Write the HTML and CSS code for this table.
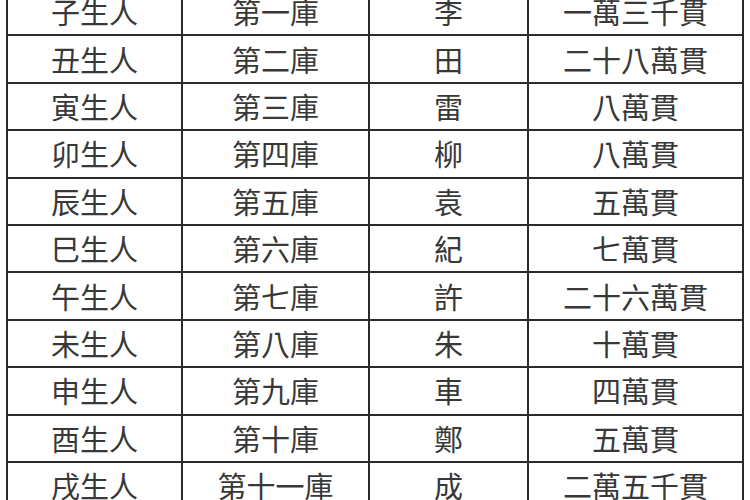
FILE: index.html
```html
<!DOCTYPE html>
<html lang="zh-Hant">
<head>
<meta charset="utf-8">
<link rel="stylesheet" href="styles.css">
</head>
<body>
<table class="kutable">
<colgroup>
<col class="c1"><col class="c2"><col class="c3"><col class="c4">
</colgroup>
<tbody>
<tr><td>子生人</td><td>第一庫</td><td>李</td><td>一萬三千貫</td></tr>
<tr><td>丑生人</td><td>第二庫</td><td>田</td><td>二十八萬貫</td></tr>
<tr><td>寅生人</td><td>第三庫</td><td>雷</td><td>八萬貫</td></tr>
<tr><td>卯生人</td><td>第四庫</td><td>柳</td><td>八萬貫</td></tr>
<tr><td>辰生人</td><td>第五庫</td><td>袁</td><td>五萬貫</td></tr>
<tr><td>巳生人</td><td>第六庫</td><td>紀</td><td>七萬貫</td></tr>
<tr><td>午生人</td><td>第七庫</td><td>許</td><td>二十六萬貫</td></tr>
<tr><td>未生人</td><td>第八庫</td><td>朱</td><td>十萬貫</td></tr>
<tr><td>申生人</td><td>第九庫</td><td>車</td><td>四萬貫</td></tr>
<tr><td>酉生人</td><td>第十庫</td><td>鄭</td><td>五萬貫</td></tr>
<tr><td>戌生人</td><td>第十一庫</td><td>成</td><td>二萬五千貫</td></tr>
</tbody>
</table>
</body>
</html>
```
FILE: styles.css
```css
html, body {
  margin: 0;
  padding: 0;
  background: #ffffff;
  overflow: hidden;
  width: 750px;
  height: 500px;
}
.kutable {
  margin-top: -13px;
  margin-left: 6px;
  border-collapse: collapse;
  table-layout: fixed;
  width: 736px;
  font-family: "Noto Sans CJK TC", "Noto Sans CJK SC", sans-serif;
  font-size: 29px;
  color: #383838;
}
.c1 { width: 175px; }
.c2 { width: 187px; }
.c3 { width: 159px; }
.c4 { width: 215px; }
.kutable td {
  border: 2px solid #2b2b2b;
  height: 45.4px;
  padding: 0;
  text-align: center;
  vertical-align: middle;
  line-height: 1;
  white-space: nowrap;
}
```
